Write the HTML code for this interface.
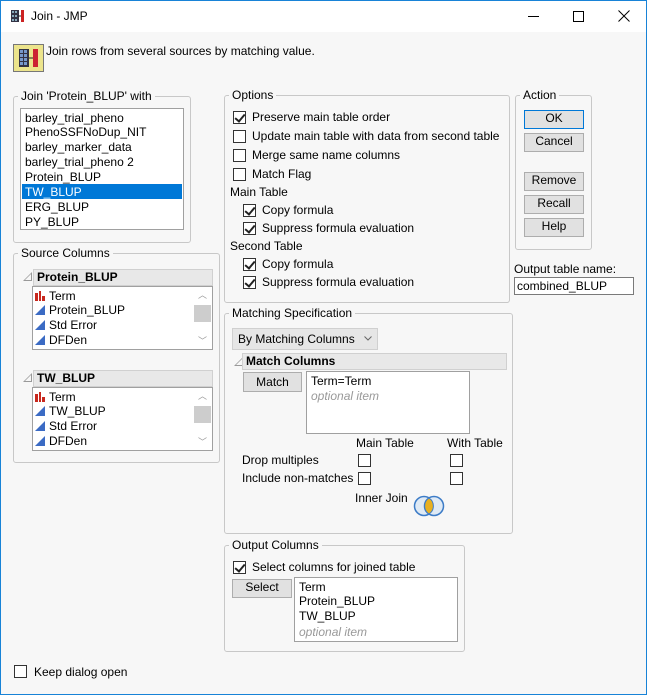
<!DOCTYPE html>
<html><head><style>
*{box-sizing:border-box;margin:0;padding:0}
body{width:647px;height:695px;overflow:hidden;font-family:"Liberation Sans",sans-serif;font-size:12px;color:#000;background:#f7f7f7;position:relative;border:1px solid #1883d7}
.a{position:absolute;white-space:nowrap}
.t{position:absolute;white-space:nowrap;line-height:15px}
.g{position:absolute;border:1px solid #c8c8c8;border-radius:3px}
.lg{position:absolute;background:#f7f7f7;padding:0 3px;line-height:14px;top:-8px;left:4px}
.box{position:absolute;background:#fff;border:1px solid #a0a0a0}
.cb{position:absolute;width:13px;height:13px;border:1px solid #333;background:#fff}
.cb.c::after{content:"";position:absolute;left:3px;top:0px;width:4px;height:8px;border:solid #222;border-width:0 2px 2px 0;transform:rotate(40deg)}
.btn{position:absolute;background:#e1e1e1;border:1px solid #adadad;text-align:center;line-height:15px}
.hd{position:absolute;background:#e8e8e8;border:1px solid #d0d0d0;font-weight:bold;line-height:14px;padding-left:3px}
.tri{position:absolute;width:0;height:0;border-left:9px solid transparent;border-bottom:9px solid #999}
.tri::after{content:"";position:absolute;left:-7px;top:2px;border-left:6px solid transparent;border-bottom:6px solid #f7f7f7}
.ic{display:inline-block;width:10px;height:10px;margin-right:4px;vertical-align:-1px}
</style></head><body>
<div class="a" style="left:0;top:0;width:645px;height:31px;background:#fff"></div>
<svg class="a" style="left:10px;top:9px" width="14" height="12"><rect x="0" y="0" width="8" height="12" fill="#334"/><g fill="#8ab"><rect x="1" y="1" width="2" height="2"/><rect x="4" y="1" width="2" height="2"/><rect x="1" y="5" width="2" height="2"/><rect x="4" y="5" width="2" height="2"/><rect x="1" y="9" width="2" height="2"/><rect x="4" y="9" width="2" height="2"/></g><rect x="10" y="0" width="3" height="12" fill="#c22"/><path d="M7 6h3" stroke="#222"/></svg>
<div class="a" style="left:30px;top:8px;font-size:12px">Join - JMP</div>
<div class="a" style="left:527px;top:15px;width:11px;height:1px;background:#000"></div>
<div class="a" style="left:572px;top:10px;width:11px;height:11px;border:1px solid #000"></div>
<svg class="a" style="left:617px;top:9px" width="12" height="12"><path d="M0.5 0.5L11.5 11.5M11.5 0.5L0.5 11.5" stroke="#000" stroke-width="1"/></svg>

<div class="a" style="left:12px;top:43px;width:31px;height:28px;background:#ece48c;border:1px solid #777"></div>
<svg class="a" style="left:18px;top:48px" width="20" height="18"><rect x="0" y="0" width="10" height="18" fill="#334"/><g fill="#79c"><rect x="1" y="1" width="3" height="3"/><rect x="5" y="1" width="3" height="3"/><rect x="1" y="5" width="3" height="3"/><rect x="5" y="5" width="3" height="3"/><rect x="1" y="9" width="3" height="3"/><rect x="5" y="9" width="3" height="3"/><rect x="1" y="13" width="3" height="3"/><rect x="5" y="13" width="3" height="3"/></g><rect x="14" y="0" width="5" height="18" fill="#c23"/><path d="M10 9h4" stroke="#222"/></svg>
<div class="a" style="left:45px;top:43px">Join rows from several sources by matching value.</div>

<div class="g" style="left:12px;top:95px;width:178px;height:147px"><div class="lg">Join 'Protein_BLUP' with</div></div>
<div class="box" style="left:19px;top:107px;width:164px;height:122px"></div>
<div class="t" style="left:24px;top:110px">barley_trial_pheno</div>
<div class="t" style="left:24px;top:124px">PhenoSSFNoDup_NIT</div>
<div class="t" style="left:24px;top:139px">barley_marker_data</div>
<div class="t" style="left:24px;top:154px">barley_trial_pheno 2</div>
<div class="t" style="left:24px;top:169px">Protein_BLUP</div>
<div class="a" style="left:21px;top:183px;width:160px;height:15px;background:#0078d7"></div>
<div class="t" style="left:24px;top:184px;color:#fff">TW_BLUP</div>
<div class="t" style="left:24px;top:199px">ERG_BLUP</div>
<div class="t" style="left:24px;top:214px">PY_BLUP</div>

<div class="g" style="left:12px;top:252px;width:207px;height:210px"><div class="lg">Source Columns</div></div>
<div class="tri" style="left:22px;top:271px"></div>
<div class="hd" style="left:32px;top:268px;width:180px;height:17px">Protein_BLUP</div>
<div class="box" style="left:31px;top:285px;width:181px;height:64px"></div>
<div class="a" style="left:193px;top:304px;width:17px;height:17px;background:#cdcdcd"></div>
<div class="a" style="left:197px;top:287px;color:#999;font-size:9px">︿</div>
<div class="a" style="left:197px;top:333px;color:#999;font-size:9px">﹀</div>
<div class="tri" style="left:22px;top:372px"></div>
<div class="hd" style="left:32px;top:369px;width:180px;height:17px">TW_BLUP</div>
<div class="box" style="left:31px;top:386px;width:181px;height:64px"></div>
<div class="a" style="left:193px;top:405px;width:17px;height:17px;background:#cdcdcd"></div>
<div class="a" style="left:197px;top:388px;color:#999;font-size:9px">︿</div>
<div class="a" style="left:197px;top:434px;color:#999;font-size:9px">﹀</div>
<div class="t" style="left:34px;top:288px"><svg class="ic" viewBox="0 0 10 10"><path d="M0 10V2h3v8zM4 10V0h2v10zM7 10V5h3v5z" fill="#c8281e"/></svg>Term</div>
<div class="t" style="left:34px;top:302px"><svg class="ic" viewBox="0 0 10 10"><path d="M0 10L10 0v10z" fill="#3b6bc4"/></svg>Protein_BLUP</div>
<div class="t" style="left:34px;top:317px"><svg class="ic" viewBox="0 0 10 10"><path d="M0 10L10 0v10z" fill="#3b6bc4"/></svg>Std Error</div>
<div class="t" style="left:34px;top:332px"><svg class="ic" viewBox="0 0 10 10"><path d="M0 10L10 0v10z" fill="#3b6bc4"/></svg>DFDen</div>
<div class="t" style="left:34px;top:389px"><svg class="ic" viewBox="0 0 10 10"><path d="M0 10V2h3v8zM4 10V0h2v10zM7 10V5h3v5z" fill="#c8281e"/></svg>Term</div>
<div class="t" style="left:34px;top:403px"><svg class="ic" viewBox="0 0 10 10"><path d="M0 10L10 0v10z" fill="#3b6bc4"/></svg>TW_BLUP</div>
<div class="t" style="left:34px;top:418px"><svg class="ic" viewBox="0 0 10 10"><path d="M0 10L10 0v10z" fill="#3b6bc4"/></svg>Std Error</div>
<div class="t" style="left:34px;top:433px"><svg class="ic" viewBox="0 0 10 10"><path d="M0 10L10 0v10z" fill="#3b6bc4"/></svg>DFDen</div>

<div class="g" style="left:223px;top:94px;width:286px;height:208px"><div class="lg">Options</div></div>
<div class="cb c" style="left:232px;top:110px"></div><div class="t" style="left:251px;top:109px">Preserve main table order</div>
<div class="cb" style="left:232px;top:129px"></div><div class="t" style="left:251px;top:128px">Update main table with data from second table</div>
<div class="cb" style="left:232px;top:148px"></div><div class="t" style="left:251px;top:147px">Merge same name columns</div>
<div class="cb" style="left:232px;top:167px"></div><div class="t" style="left:251px;top:166px">Match Flag</div>
<div class="t" style="left:229px;top:184px">Main Table</div>
<div class="cb c" style="left:242px;top:203px"></div><div class="t" style="left:261px;top:202px">Copy formula</div>
<div class="cb c" style="left:242px;top:221px"></div><div class="t" style="left:261px;top:220px">Suppress formula evaluation</div>
<div class="t" style="left:229px;top:238px">Second Table</div>
<div class="cb c" style="left:242px;top:257px"></div><div class="t" style="left:261px;top:256px">Copy formula</div>
<div class="cb c" style="left:242px;top:275px"></div><div class="t" style="left:261px;top:274px">Suppress formula evaluation</div>

<div class="g" style="left:514px;top:94px;width:77px;height:155px"><div class="lg">Action</div></div>
<div class="btn" style="left:523px;top:109px;width:60px;height:19px;border-color:#0078d7">OK</div>
<div class="btn" style="left:523px;top:132px;width:60px;height:19px">Cancel</div>
<div class="btn" style="left:523px;top:171px;width:60px;height:19px">Remove</div>
<div class="btn" style="left:523px;top:194px;width:60px;height:19px">Recall</div>
<div class="btn" style="left:523px;top:217px;width:60px;height:19px">Help</div>
<div class="t" style="left:513px;top:261px">Output table name:</div>
<div class="box" style="left:513px;top:276px;width:120px;height:18px;border-color:#7a7a7a"></div>
<div class="t" style="left:516px;top:278px">combined_BLUP</div>

<div class="g" style="left:223px;top:312px;width:289px;height:221px"><div class="lg">Matching Specification</div></div>
<div class="a" style="left:231px;top:327px;width:146px;height:22px;background:#e6e6e6;border:1px solid #d0d0d0"></div>
<div class="t" style="left:237px;top:331px">By Matching Columns</div>
<svg class="a" style="left:363px;top:335px" width="8" height="5"><path d="M0.5 0.5L4 4L7.5 0.5" fill="none" stroke="#666"/></svg>
<div class="tri" style="left:233px;top:356px"></div>
<div class="hd" style="left:241px;top:352px;width:265px;height:17px">Match Columns</div>
<div class="btn" style="left:242px;top:371px;width:59px;height:20px;line-height:18px">Match</div>
<div class="box" style="left:305px;top:370px;width:164px;height:63px"></div>
<div class="t" style="left:310px;top:373px">Term=Term</div>
<div class="t" style="left:310px;top:388px;color:#999;font-style:italic">optional item</div>
<div class="t" style="left:355px;top:435px">Main Table</div>
<div class="t" style="left:446px;top:435px">With Table</div>
<div class="t" style="left:241px;top:452px">Drop multiples</div>
<div class="t" style="left:241px;top:470px">Include non-matches</div>
<div class="cb" style="left:357px;top:453px"></div><div class="cb" style="left:449px;top:453px"></div>
<div class="cb" style="left:357px;top:471px"></div><div class="cb" style="left:449px;top:471px"></div>
<div class="t" style="left:354px;top:490px">Inner Join</div>
<svg class="a" style="left:412px;top:494px" width="33" height="22"><circle cx="11" cy="11" r="9.5" fill="#dfeaf5" stroke="#3d7cc7" stroke-width="1.5"/><circle cx="21" cy="11" r="9.5" fill="#dfeaf5" stroke="#3d7cc7" stroke-width="1.5"/><path d="M16 3a9.5 9.5 0 0 1 0 16a9.5 9.5 0 0 1 0-16z" fill="#e8b020" stroke="#3d7cc7"/></svg>

<div class="g" style="left:223px;top:544px;width:241px;height:107px"><div class="lg">Output Columns</div></div>
<div class="cb c" style="left:232px;top:560px"></div><div class="t" style="left:251px;top:559px">Select columns for joined table</div>
<div class="btn" style="left:231px;top:578px;width:60px;height:19px">Select</div>
<div class="box" style="left:293px;top:576px;width:164px;height:65px"></div>
<div class="t" style="left:298px;top:579px">Term</div>
<div class="t" style="left:298px;top:593px">Protein_BLUP</div>
<div class="t" style="left:298px;top:608px">TW_BLUP</div>
<div class="t" style="left:298px;top:624px;color:#999;font-style:italic">optional item</div>

<div class="cb" style="left:13px;top:664px"></div><div class="t" style="left:33px;top:664px">Keep dialog open</div>
</body></html>
